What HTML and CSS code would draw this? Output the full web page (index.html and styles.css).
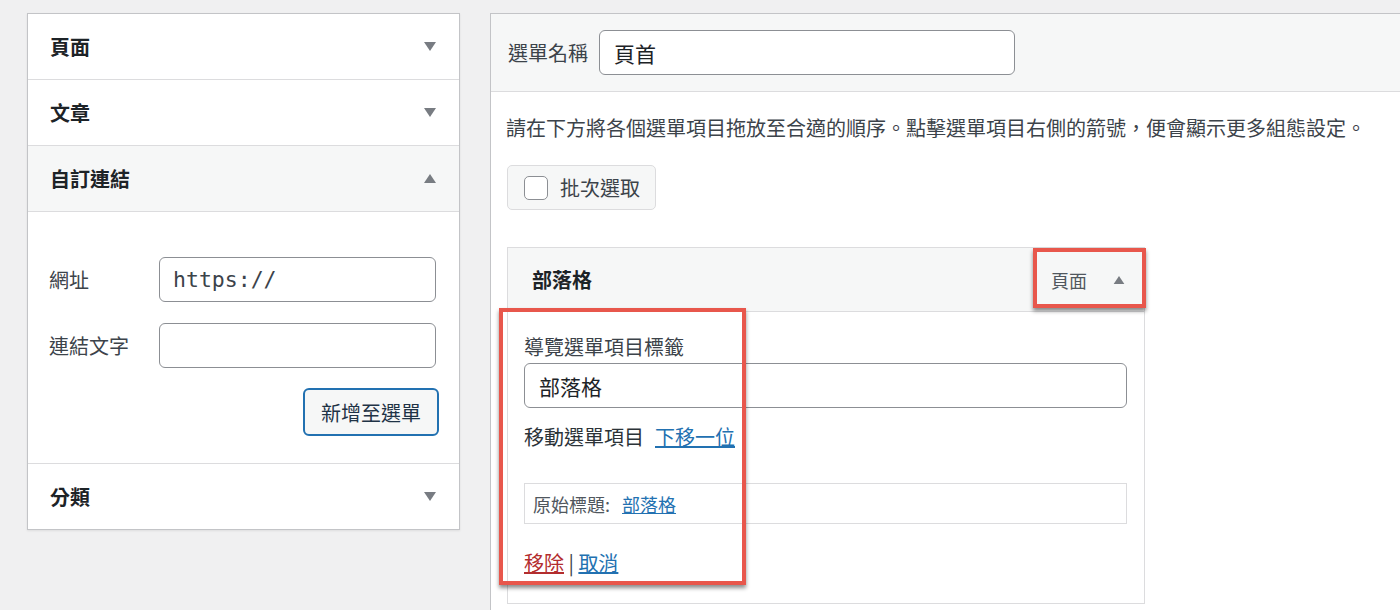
FILE: index.html
```html
<!DOCTYPE html>
<html lang="zh-Hant">
<head>
<meta charset="utf-8">
<title>選單</title>
<link rel="stylesheet" href="styles.css">
</head>
<body>
<div class="page">
  <div class="side">
    <div class="acc">
      <div class="acc-head"><span>頁面</span><svg class="tri" viewBox="0 0 12 9"><polygon points="0,0 12,0 6,9"/></svg></div>
    </div>
    <div class="acc">
      <div class="acc-head"><span>文章</span><svg class="tri" viewBox="0 0 12 9"><polygon points="0,0 12,0 6,9"/></svg></div>
    </div>
    <div class="acc open">
      <div class="acc-head"><span>自訂連結</span><svg class="tri" viewBox="0 0 12 9"><polygon points="0,9 12,9 6,0"/></svg></div>
      <div class="acc-body">
        <div class="field">
          <label class="field-label">網址</label>
          <div class="input mono">https://</div>
        </div>
        <div class="field">
          <label class="field-label">連結文字</label>
          <div class="input"></div>
        </div>
        <div class="btn-row">
          <button class="btn-add">新增至選單</button>
        </div>
      </div>
    </div>
    <div class="acc last">
      <div class="acc-head"><span>分類</span><svg class="tri" viewBox="0 0 12 9"><polygon points="0,0 12,0 6,9"/></svg></div>
    </div>
  </div>

  <div class="main">
    <div class="main-head">
      <span class="name-label">選單名稱</span>
      <div class="name-input">頁首</div>
    </div>
    <div class="main-body">
      <p class="desc">請在下方將各個選單項目拖放至合適的順序。點擊選單項目右側的箭號，便會顯示更多組態設定。</p>
      <div class="bulk"><span class="checkbox"></span><span>批次選取</span></div>

      <div class="item">
        <div class="item-head">
          <span class="item-title">部落格</span>
          <span class="item-type">頁面<svg class="tri small" viewBox="0 0 12 9"><polygon points="0,9 12,9 6,0"/></svg></span>
        </div>
        <div class="item-settings">
          <div class="set-label">導覽選單項目標籤</div>
          <div class="set-input">部落格</div>
          <div class="move"><span>移動選單項目</span><a href="#" class="link">下移一位</a></div>
          <div class="original">原始標題: <a href="#" class="link">部落格</a></div>
          <div class="actions"><a href="#" class="remove">移除</a> | <a href="#" class="link">取消</a></div>
        </div>
        <div class="hl hl-type"></div>
        <div class="hl hl-settings"></div>
      </div>
    </div>
  </div>
</div>
</body>
</html>
```

FILE: styles.css
```css
html, body {
  margin: 0;
  padding: 0;
}
body {
  background: #f0f0f1;
  font-family: "Noto Sans CJK TC", "Noto Sans", sans-serif;
  color: #3c434a;
  font-size: 20px;
  line-height: 30px;
  width: 1400px;
  height: 610px;
  overflow: hidden;
}
.page {
  display: flex;
  align-items: flex-start;
  padding: 13px 0 0 27px;
  gap: 30px;
}

/* left accordion */
.side {
  width: 431px;
  flex: none;
  background: #fff;
  border: 1px solid #c3c4c7;
  box-shadow: 0 1px 2px rgba(0,0,0,.08);
}
.acc {
  border-bottom: 1px solid #dcdcde;
}
.acc.last {
  border-bottom: none;
}
.acc-head {
  height: 65px;
  display: flex;
  align-items: center;
  justify-content: space-between;
  padding: 0 23px 0 22px;
  font-weight: 700;
  font-size: 20px;
  color: #1d2327;
}
.acc.open .acc-head {
  background: #f6f7f7;
  border-bottom: 1px solid #dcdcde;
}
.tri {
  width: 12px;
  height: 9px;
  fill: #787c82;
}
.acc-body {
  padding: 45px 19px 27px 21px;
  display: flex;
  flex-direction: column;
  gap: 21px;
}
.field {
  display: flex;
  align-items: center;
}
.field-label {
  width: 110px;
  flex: none;
  color: #3c434a;
}
.input {
  width: 277px;
  height: 45px;
  box-sizing: border-box;
  border: 1px solid #8c8f94;
  border-radius: 6px;
  background: #fff;
  padding: 0 13px;
  display: flex;
  align-items: center;
}
.mono {
  font-family: "DejaVu Sans Mono", "Liberation Mono", monospace;
  font-size: 21.5px;
  color: #3c434a;
}
.btn-row {
  display: flex;
  justify-content: flex-end;
  margin-top: -1px;
  margin-right: 1px;
}
.btn-add {
  width: 136px;
  height: 48px;
  box-sizing: border-box;
  border: 2px solid #2271b1;
  border-radius: 6px;
  background: #f6f7f7;
  color: #1f3346;
  font-family: inherit;
  font-size: 20px;
  padding: 0;
}

/* right editor */
.main {
  width: 940px;
  flex: none;
  background: #fff;
  border: 1px solid #c3c4c7;
  border-right: none;
  min-height: 620px;
}
.main-head {
  height: 77px;
  background: #f6f7f7;
  border-bottom: 1px solid #dcdcde;
  display: flex;
  align-items: center;
  padding-left: 17px;
  gap: 11px;
}
.name-label {
  color: #3c434a;
}
.name-input {
  width: 416px;
  height: 45px;
  box-sizing: border-box;
  background: #fff;
  border: 1px solid #8c8f94;
  border-radius: 6px;
  padding-left: 14px;
  display: flex;
  align-items: center;
  font-size: 21px;
  color: #1d2327;
}
.main-body {
  padding: 21px 0 0 15px;
}
.desc {
  margin: 0 0 22px;
}
.bulk {
  width: 149px;
  height: 45px;
  box-sizing: border-box;
  margin-left: 1px;
  border: 1px solid #dcdcde;
  border-radius: 5px;
  background: #f6f7f7;
  display: flex;
  align-items: center;
  padding-left: 16px;
  gap: 12px;
}
.checkbox {
  width: 24px;
  height: 24px;
  box-sizing: border-box;
  border: 1px solid #8c8f94;
  border-radius: 5px;
  background: #fff;
}

/* menu item */
.item {
  position: relative;
  width: 638px;
  margin: 37px 0 0 1px;
}
.item-head {
  height: 63px;
  background: #f6f7f7;
  border: 1px solid #dcdcde;
  display: flex;
  align-items: center;
  justify-content: space-between;
  padding: 0 19px 0 24px;
}
.item-title {
  font-weight: 700;
  color: #1d2327;
}
.item-type {
  display: flex;
  align-items: center;
  gap: 26px;
  font-size: 18px;
  color: #50575e;
}
.tri.small {
  width: 12px;
  height: 8px;
}
.item-settings {
  border: 1px solid #dcdcde;
  border-top: none;
  padding: 20px 17px 25px 16px;
}
.set-label {
  color: #3c434a;
}
.set-input {
  height: 45px;
  box-sizing: border-box;
  margin-top: 1px;
  border: 1px solid #8c8f94;
  border-radius: 6px;
  padding-left: 14px;
  display: flex;
  align-items: center;
  font-size: 21px;
  color: #1d2327;
}
.move {
  margin-top: 14px;
  color: #2c3338;
  display: flex;
  gap: 11px;
}
.link {
  color: #2271b1;
  text-decoration: underline;
}
.original {
  margin-top: 31px;
  height: 41px;
  box-sizing: border-box;
  border: 1px solid #dcdcde;
  padding-left: 8px;
  display: flex;
  align-items: center;
  gap: 12px;
  font-size: 18px;
  color: #50575e;
}
.actions {
  margin-top: 24px;
  color: #3c434a;
}
.remove {
  color: #b32d2e;
  text-decoration: underline;
}

/* red highlight annotations */
.hl {
  position: absolute;
  border: 4px solid #e8574c;
  box-shadow: 0 3px 4px rgba(0,0,0,.45);
}
.hl-type {
  left: 526px;
  top: 1px;
  width: 105px;
  height: 52px;
}
.hl-settings {
  left: -8px;
  top: 61px;
  width: 239px;
  height: 269px;
}
```
